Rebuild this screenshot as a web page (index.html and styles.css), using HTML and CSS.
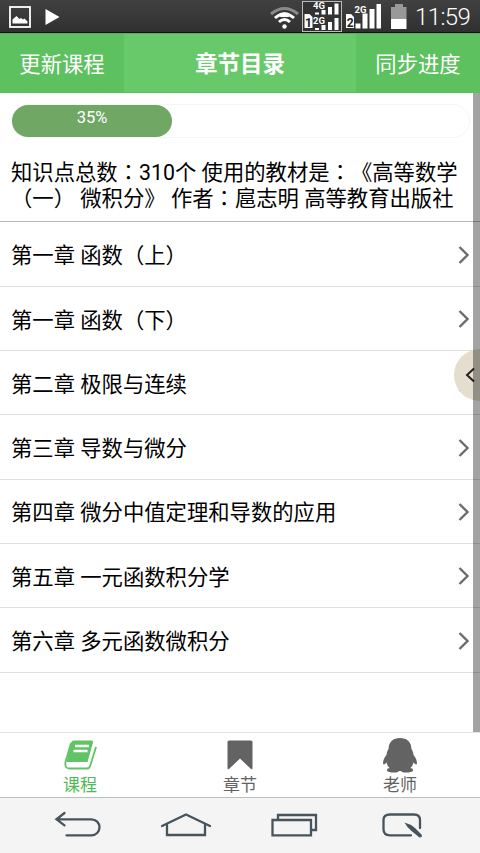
FILE: index.html
```html
<!DOCTYPE html>
<html lang="zh-CN">
<head>
<meta charset="utf-8">
<title>章节目录</title>
<link rel="stylesheet" href="styles.css">
</head>
<body>
<div class="status">
  <svg class="status-left" width="70" height="33" viewBox="0 0 70 33">
    <rect x="10" y="7" width="20" height="20" fill="none" stroke="#fff" stroke-width="1.8"/>
    <path d="M12.500 23.500v-4l4-3.500 3 3 1.500-1 2 1.500 1.500-1 3 3v2z" fill="#fff"/>
    <path d="M45.500 9v16l14-8z" fill="#fff"/>
  </svg>
  <svg class="status-right" width="146" height="33" viewBox="268 0 146 33">
    <g fill="none" stroke-width="3">
      <path d="M271 14q13.500-11 27 0" stroke="#8a8a8a"/>
      <path d="M275 18q9.500-8.500 19 0M279 22q5.500-5 11 0" stroke="#fff"/>
    </g>
    <path d="M284.500 12l5 5h-10z" fill="#fff"/><circle cx="284.500" cy="26.500" r="2.200" fill="#fff"/>
    <rect x="302.500" y="1.500" width="39" height="30" fill="#333" stroke="#bbb"/>
    <g fill="#fff">
      <path d="M304.500 14h5l3 3v11h-8zM346 14h5l3 3v11h-8z"/>
      <path d="M315 12.500h4v2h-4zM321.500 10h4v4.500h-4zM328 7h4v7.500h-4zM334.500 3.500h4v11h-4z"/>
      <path d="M315 28h4v2h-4zM321.500 25h4v5h-4zM328 22h4v8h-4zM334.500 18h4v12h-4z"/>
      <path d="M355.500 23.500h5V28.500h-5zM362.500 13.500h5V28.500h-5zM369.500 9h5V28.500h-5zM376.500 4h4.500V28.500h-4.500z"/>
      <path d="M391 19h15.500v10H391z"/>
    </g>
    <path d="M391 7h4V4h8v3h3.500v12H391z" fill="#999"/>
    <g class="tiny" fill="#fff"><text x="313" y="9">4G</text><text x="313" y="23.500">2G</text><text x="354.500" y="12.500">2G</text></g>
    <g class="sim" fill="#222"><text x="305" y="26.500">1</text><text x="346.700" y="26.500">2</text></g>
  </svg>
  <span class="clock">11:59</span>
</div>
<header class="header">
  <div class="side">更新课程</div>
  <h1>章节目录</h1>
  <div class="side">同步进度</div>
</header>
<main class="content">
  <div class="progress"><div class="bar" style="width:35%">35%</div></div>
  <div class="info">
    <div>知识点总数<span class="mid" lang="zh-TW">：</span>310个 使用的教材是<span class="mid" lang="zh-TW">：</span>《高等数学</div>
    <div>（一） 微积分》 作者<span class="mid" lang="zh-TW">：</span>扈志明 高等教育出版社</div>
  </div>
  <ul class="chapters">
    <li>第一章 函数（上）<svg class="chev" viewBox="0 0 12 20"><path d="M1.500 2l8 8-8 8"/></svg></li>
    <li>第一章 函数（下）<svg class="chev" viewBox="0 0 12 20"><path d="M1.500 2l8 8-8 8"/></svg></li>
    <li>第二章 极限与连续<svg class="chev" viewBox="0 0 12 20"><path d="M1.500 2l8 8-8 8"/></svg></li>
    <li>第三章 导数与微分<svg class="chev" viewBox="0 0 12 20"><path d="M1.500 2l8 8-8 8"/></svg></li>
    <li>第四章 微分中值定理和导数的应用<svg class="chev" viewBox="0 0 12 20"><path d="M1.500 2l8 8-8 8"/></svg></li>
    <li>第五章 一元函数积分学<svg class="chev" viewBox="0 0 12 20"><path d="M1.500 2l8 8-8 8"/></svg></li>
    <li>第六章 多元函数微积分<svg class="chev" viewBox="0 0 12 20"><path d="M1.500 2l8 8-8 8"/></svg></li>
  </ul>
  <div class="handle"><svg width="26" height="52" viewBox="0 0 26 52"><path d="M20 19.500l-7 6.500 7 6.500" fill="none" stroke="#222" stroke-width="2"/></svg></div>
  <div class="scrollbar"></div>
</main>
<nav class="tabs">
  <div class="tab active">
    <svg width="36" height="36" viewBox="-1 0 36 36">
      <path d="M10.500 2.500H28q2.500 0 2 2L24.500 24H3.500L8 5q.5-2.500 2.500-2.500z" fill="#60c465"/>
      <path d="M8 5L2.500 24q-1 6.500 4 6.500H24q2.500 0 3.300-3L33 9" fill="none" stroke="#60c465" stroke-width="1.800"/>
      <path d="M12 8h14M10.500 13h14" stroke="#fff" stroke-width="2.300"/>
    </svg>
    <span>课程</span>
  </div>
  <div class="tab">
    <svg width="36" height="36" viewBox="0 0 36 36"><path d="M7 2.500h22q1.500 0 1.500 1.500V30q0 2-1.500 1L18 20.500 7 31q-1.500 1-1.500-1V4Q5.500 2.500 7 2.500z" fill="#636363"/></svg>
    <span>章节</span>
  </div>
  <div class="tab">
    <svg width="36" height="36" viewBox="0 0 36 36"><path d="M18 0C11 0 7 3.500 6.500 11q-2 3-2 6Q1 21 1 25.500q.5 2.500 3.500-1 1 4 3 5.500-3 .5-2.500 2.700Q6 34.500 12 34.500q4 0 5-1.500h2q1 1.500 5 1.500 6 0 7-1.800.5-2.200-2.500-2.700 2-1.500 3-5.500 3 3.500 3.500 1 0-4.500-3.500-8.500 0-3-2-6C29 3.500 25 0 18 0z" fill="#636363"/></svg>
    <span>老师</span>
  </div>
</nav>
<footer class="sysnav">
  <svg width="480" height="55" viewBox="0 798 480 55">
    <g fill="none" stroke="#46545e" stroke-width="2.300" stroke-linecap="round">
      <path d="M64.500 813l-8 6.300 8 6M57 819.300h34.500a8 8 0 0 1 0 16H66.500"/>
      <path d="M162 826l24-11.500 24 11.500M167 824v11h38v-11"/>
      <path d="M272.500 820h38.500v15.300h-38.500zM278 819v-4h38v15h-4"/>
      <path d="M411 835.300h-21q-6.500 0-6.500-6V820q0-5.500 6.500-5.500h24q6 0 6 5.500v8"/>
    </g>
    <path d="M404.500 822.500q6 1.500 10.500 5.500l6.500 6.500q1.500 3-2 3L411.500 831q-4.500-3.500-7-8.500z" fill="#46545e"/>
  </svg>
</footer>
</body>
</html>
```

FILE: styles.css
```css
* { box-sizing: border-box; }
body {
  margin: 0;
  width: 480px;
  height: 853px;
  overflow: hidden;
  display: flex;
  flex-direction: column;
  background: #fff;
  color: #000;
  font-family: Roboto, "Noto Sans CJK SC", sans-serif;
  font-size: 21.33px;
  text-spacing-trim: space-all;
}
svg { display: block; flex: none; }
.status {
  height: 33px;
  flex: none;
  display: flex;
  align-items: center;
  background: linear-gradient(#414141, #303030);
  border-bottom: 1px solid #0a0a0a;
}
.status-right { margin-left: 198px; }
.tiny { font: bold 9.500px Roboto, sans-serif; }
.sim { font: bold 12px Roboto, sans-serif; }
.clock { color: #fff; font-size: 24px; line-height: 33px; margin-left: 1px; padding-top: 3px; font-weight: 300; letter-spacing: -.6px; }
.header {
  height: 60px;
  flex: none;
  display: flex;
  align-items: stretch;
  background: #68c96b;
  border-top: 1px solid #4db950;
  border-bottom: 1px solid #57c25b;
  color: #fff;
  line-height: 61px;
  text-align: center;
}
.header h1 { flex: 1; margin: 0; font-size: 22.500px; font-weight: 700; }
.side { width: 124px; background: #5dc160; }
.content { position: relative; height: 639px; flex: none; padding-top: 11px; }
.progress {
  height: 34px;
  width: 459px;
  margin-left: 11px;
  border: 1px solid #f5f5f5;
  border-radius: 17px;
}
.bar {
  height: 32px;
  border-radius: 16px;
  background: #70a765;
  color: #fff;
  font-size: 16.500px;
  line-height: 26px;
  text-align: center;
}
.info { padding: 22px 0 9px 11px; line-height: 26px; white-space: nowrap; border-bottom: 1px solid #b8b8b8; }
.info div { height: 26px; }
.mid { font-family: "Noto Sans CJK TC", sans-serif; line-height: 1; }
.chapters { list-style: none; margin: 0; padding: .6px 0 0; }
.chapters li {
  height: 64.300px;
  display: flex;
  align-items: center;
  justify-content: space-between;
  padding: 0 10px 1px 11px;
  border-bottom: 1px solid #dedede;
}
.chev { width: 12px; height: 20px; margin-top: 2px; fill: none; stroke: #6b6b6b; stroke-width: 2.400; }
.handle {
  position: absolute;
  right: 0;
  top: 256px;
  width: 26px;
  height: 52px;
  background: #e5dece;
  border-radius: 26px 0 0 26px;
}
.scrollbar { position: absolute; top: 0; right: 0; width: 7px; height: 639px; background: rgba(0, 0, 0, .36); }
.tabs { height: 65px; flex: none; display: flex; border-top: 1px solid #e3e3e3; }
.tab {
  flex: 1;
  display: flex;
  flex-direction: column;
  align-items: center;
  padding-top: 5px;
  color: #636363;
  font-size: 17px;
  line-height: 22px;
}
.active { color: #4dbb53; }
.sysnav { height: 56px; flex: none; background: #f4f4f4; border-top: 1px solid #b9bfbd; }
```
